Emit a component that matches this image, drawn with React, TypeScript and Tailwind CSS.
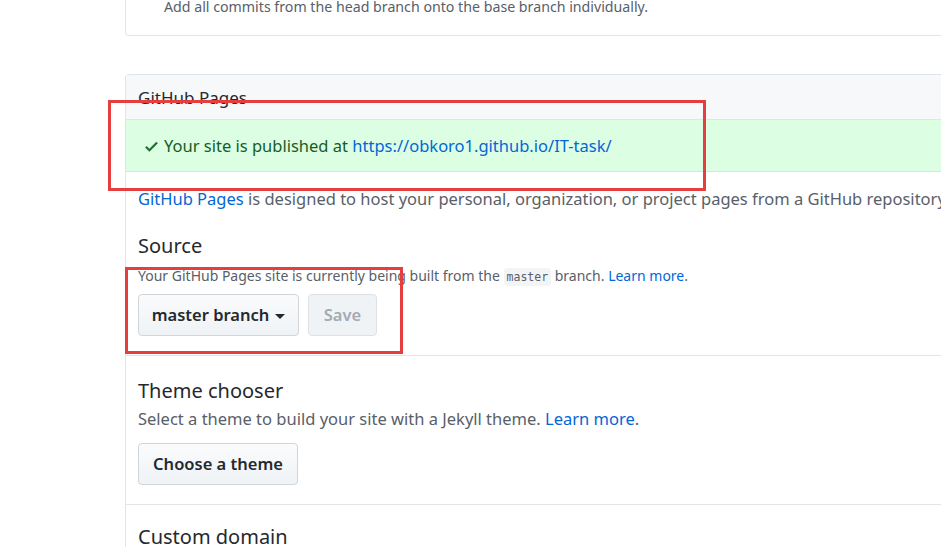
export default function App() {
  const font = { fontFamily: '"Segoe UI", "Noto Sans", "Liberation Sans", sans-serif' };
  return (
    <div className="relative h-[547px] overflow-hidden bg-white pl-[125px] text-[#24292e]" style={font}>
      {/* previous settings card, cut at top */}
      <div className="h-[36px] w-[900px] rounded-b-[4px] border border-t-0 border-[#e1e4e8]">
        <p className="pl-[38px] text-[14.2px] leading-[14px] text-[#586069]">
          Add all commits from the head branch onto the base branch individually.
        </p>
      </div>

      {/* GitHub Pages card */}
      <div className="mt-[38px] w-[900px] rounded-t-[4px] border border-b-0 border-[#e1e4e8]">
        <div className="flex h-[45px] items-center border-b border-[#e1e4e8] bg-[#f6f8fa] px-[12px] pt-[1px]">
          <h2 className="text-[17px] font-normal">GitHub Pages</h2>
        </div>
        <div className="flex h-[52px] items-center gap-[6px] border-b border-[#d1e9d6] bg-[#dcffe4] px-[19px] pt-[1px] text-[16.5px] text-[#165c26]">
          <svg width="13" height="17" viewBox="0 0 12 16" fill="#1f6f32">
            <path d="M12 5l-8 8-4-4 1.5-1.5L4 10l6.5-6.5L12 5z" />
          </svg>
          <span>
            Your site is published at{" "}
            <a className="text-[#0366d6]">https://obkoro1.github.io/IT-task/</a>
          </span>
        </div>

        <div className="px-[12px] pt-[14px]">
          <p className="whitespace-nowrap text-[16.5px] leading-[26px] text-[#586069]">
            <a className="text-[#0366d6]">GitHub Pages</a> is designed to host your personal, organization, or project
            pages from a GitHub repository.
          </p>

          <h3 className="mt-[19px] text-[20px] leading-[30px] text-[#24292e]">Source</h3>
          <p className="mt-[5px] text-[14px] leading-[20px] text-[#586069]">
            Your GitHub Pages site is currently being built from the{" "}
            <code className="rounded-[4px] bg-[#f3f4f5] px-[3px] py-[2px] text-[11.5px]" style={{ fontFamily: '"DejaVu Sans Mono", monospace' }}>
              master
            </code>{" "}
            branch. <a className="text-[#0366d6]">Learn more</a>.
          </p>
          <div className="mt-[7px] flex gap-[9px]">
            <button className="flex h-[42px] w-[161px] items-center justify-center gap-[6px] rounded-[4px] border border-[#d1d5da] bg-gradient-to-b from-[#fafbfc] to-[#eff3f6] text-[16.5px] font-semibold text-[#24292e]">
              master branch
              <span className="mt-[2px] h-0 w-0 border-x-[5px] border-t-[5px] border-x-transparent border-t-[#24292e]" />
            </button>
            <button className="h-[42px] w-[69px] rounded-[4px] border border-[#dfe2e5] bg-[#eff3f6] text-[16.5px] font-semibold text-[#a3aab1]">
              Save
            </button>
          </div>
        </div>

        <div className="mt-[19px] border-t border-[#e1e4e8] px-[12px] pt-[20px]">
          <h3 className="text-[20px] leading-[30px] text-[#24292e]">Theme chooser</h3>
          <p className="text-[16.5px] leading-[26px] text-[#586069]">
            Select a theme to build your site with a Jekyll theme. <a className="text-[#0366d6]">Learn more</a>.
          </p>
          <button className="mt-[11px] h-[42px] w-[160px] rounded-[4px] border border-[#d1d5da] bg-gradient-to-b from-[#fafbfc] to-[#eff3f6] text-[16.5px] font-semibold text-[#24292e]">
            Choose a theme
          </button>
        </div>

        <div className="mt-[19px] border-t border-[#e1e4e8] px-[12px] pt-[17px]">
          <h3 className="text-[20px] leading-[30px] text-[#24292e]">Custom domain</h3>
        </div>
      </div>

      {/* red annotation boxes */}
      <div className="pointer-events-none absolute left-[108px] top-[100px] h-[91px] w-[598px] border-[3px] border-[#e53e3e]" />
      <div className="pointer-events-none absolute left-[125px] top-[267px] h-[87px] w-[278px] border-[3px] border-[#e53e3e]" />
    </div>
  );
}
